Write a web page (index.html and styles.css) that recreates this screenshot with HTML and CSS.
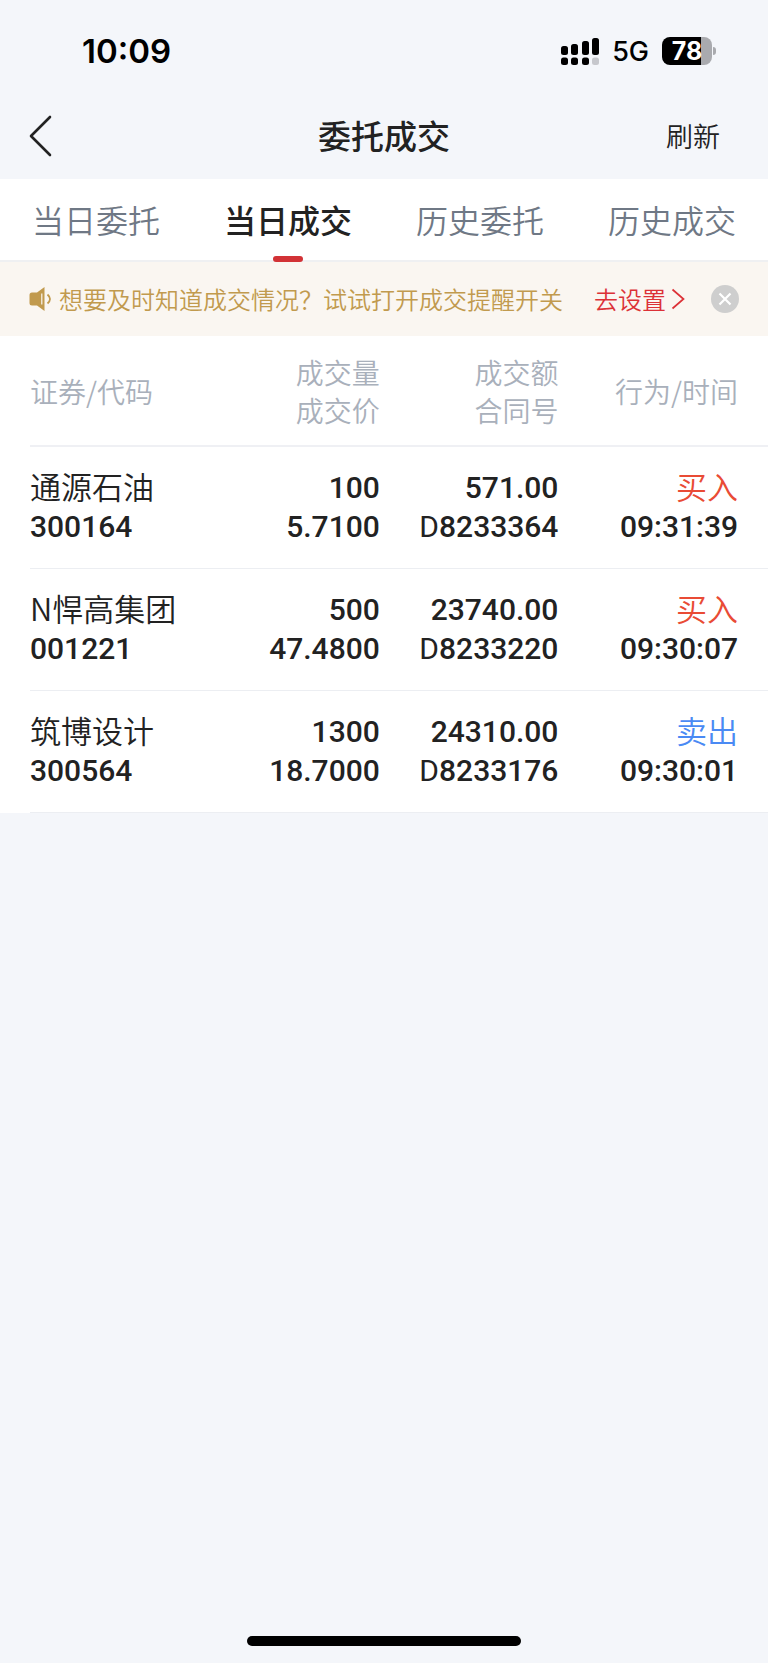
FILE: index.html
```html
<!DOCTYPE html>
<html lang="zh-CN">
<head>
<meta charset="utf-8">
<meta name="viewport" content="width=device-width, initial-scale=1">
<title>委托成交</title>
<link rel="stylesheet" href="styles.css">
</head>
<body>
<div class="app">
  <div class="status">
    <time class="clock">10:09</time>
    <div class="indicators">
      <svg class="signal" width="40" height="28" viewBox="0 0 40 28" aria-hidden="true">
        <rect x="1" y="9" width="7" height="9" rx="2.5"/>
        <rect x="11" y="7" width="7" height="11" rx="2.5"/>
        <rect x="22" y="4" width="7" height="14" rx="2.5"/>
        <rect x="32" y="1" width="7" height="17" rx="2.5"/>
        <rect x="1" y="20.500" width="7" height="7.500" rx="2.500"/>
        <rect x="11" y="20.500" width="7" height="7.500" rx="2.500"/>
        <rect x="22" y="20.500" width="7" height="7.500" rx="2.500"/>
        <rect x="32" y="20.500" width="7" height="7.500" rx="2.500" fill="#c6c7cc"/>
      </svg>
      <span class="network">5G</span>
      <span class="battery"><span class="level">78</span></span>
    </div>
  </div>

  <header class="navbar">
    <button class="back" type="button" aria-label="返回">
      <svg width="24" height="42" viewBox="0 0 24 42" aria-hidden="true"><path d="M21 2 2 21 21 40" fill="none" stroke="#222" stroke-width="2.600" stroke-linecap="round" stroke-linejoin="round"/></svg>
    </button>
    <h1 class="title">委托成交</h1>
    <button class="refresh" type="button">刷新</button>
  </header>

  <nav class="tabs">
    <a class="tab" href="#today-orders">当日委托</a>
    <a class="tab active" href="#today-deals" aria-current="page">当日成交</a>
    <a class="tab" href="#past-orders">历史委托</a>
    <a class="tab" href="#past-deals">历史成交</a>
  </nav>

  <div class="notice">
    <svg class="speaker" width="24" height="26" viewBox="0 0 24 26" aria-hidden="true">
      <path d="M3 6.500h5L15.500 1v24L8 19.500H3a2.500 2.500 0 0 1-2.500-2.500V9A2.500 2.500 0 0 1 3 6.500Z" fill="#c19a4e"/>
      <path d="M12.800 7.500v11" stroke="#faf6f1" stroke-width="1.200"/>
      <path d="M18.500 8.500q5 4.500 0 9" fill="none" stroke="#c19a4e" stroke-width="1.800"/>
    </svg>
    <p class="message">想要及时知道成交情况？试试打开成交提醒开关</p>
    <a class="setup" href="#settings">去设置<svg width="14" height="22" viewBox="0 0 14 22" aria-hidden="true"><path d="M1.500 1.500 12.500 11 1.500 20.500" fill="none" stroke="currentColor" stroke-width="1.700"/></svg></a>
    <button class="close" type="button" aria-label="关闭">
      <svg width="28" height="28" viewBox="0 0 28 28" aria-hidden="true"><circle cx="14" cy="14" r="14" fill="#cecece"/><path d="m8.500 8.500 11 11m0-11-11 11" stroke="#fff" stroke-width="2.200"/></svg>
    </button>
  </div>

  <main class="panel">
    <table class="deals">
      <thead>
        <tr>
          <th scope="col">证券/代码</th>
          <th scope="col">成交量<br>成交价</th>
          <th scope="col">成交额<br>合同号</th>
          <th scope="col">行为/时间</th>
        </tr>
      </thead>
      <tbody>
        <tr>
          <td><div class="name">通源石油</div><div>300164</div></td>
          <td>100<br>5.7100</td>
          <td>571.00<br><span class="prefix">D</span>8233364</td>
          <td><div class="name buy">买入</div><div>09:31:39</div></td>
        </tr>
        <tr>
          <td><div class="name">N悍高集团</div><div>001221</div></td>
          <td>500<br>47.4800</td>
          <td>23740.00<br><span class="prefix">D</span>8233220</td>
          <td><div class="name buy">买入</div><div>09:30:07</div></td>
        </tr>
        <tr>
          <td><div class="name">筑博设计</div><div>300564</div></td>
          <td>1300<br>18.7000</td>
          <td>24310.00<br><span class="prefix">D</span>8233176</td>
          <td><div class="name sell">卖出</div><div>09:30:01</div></td>
        </tr>
      </tbody>
    </table>
  </main>

  <footer class="home"><div class="home-bar"></div></footer>
</div>
</body>
</html>
```
FILE: styles.css
```css
* {
  box-sizing: border-box;
}

body {
  margin: 0;
  background: #f4f6fa;
  color: #222;
  font-family: "Noto Sans CJK SC", sans-serif;
  font-weight: 350;
}

button {
  padding: 0;
  border: 0;
  background: none;
  color: inherit;
  font: inherit;
  cursor: pointer;
}

a {
  color: inherit;
  text-decoration: none;
}

svg {
  display: block;
}

.app {
  display: flex;
  flex-direction: column;
  min-height: 100vh;
}

.status {
  display: flex;
  align-items: center;
  justify-content: space-between;
  height: 93px;
  padding: 9px 52px 0 82px;
  color: #000;
  font-family: Inter, sans-serif;
}

.clock {
  font-size: 33px;
  font-weight: 600;
}

.indicators {
  display: flex;
  align-items: center;
}

.network {
  margin: 0 13px 0 12px;
  font-size: 27px;
  font-weight: 500;
}

.battery {
  position: relative;
  width: 50px;
  height: 28px;
  margin-right: 4px;
  border-radius: 8px;
  background: linear-gradient(to right, #000 78%, #a9aaae 78%);
}

.battery::after {
  content: "";
  position: absolute;
  top: 10px;
  right: -4px;
  width: 3px;
  height: 8px;
  border-radius: 0 4px 4px 0;
  background: #a9aaae;
}

.level {
  display: block;
  color: #fff;
  font-size: 25px;
  font-weight: 700;
  line-height: 28px;
  text-align: center;
}

.navbar {
  display: grid;
  grid-template-columns: 1fr auto 1fr;
  align-items: center;
  height: 86px;
  padding: 0 48px 0 29px;
}

.back {
  justify-self: start;
}

.title {
  margin: 0 0 0 19px;
  padding-bottom: 3px;
  font-size: 33px;
  font-weight: 500;
  line-height: 48px;
}

.refresh {
  justify-self: end;
  font-size: 27px;
  line-height: 40px;
}

.tabs {
  display: grid;
  grid-template-columns: repeat(4, 1fr);
  height: 83px;
  border-bottom: 2px solid #eff0f2;
  background: #fff;
}

.tab {
  position: relative;
  color: #6f7885;
  font-size: 32px;
  line-height: 80px;
  text-align: center;
}

.active {
  color: #222;
  font-weight: 500;
}

.active::after {
  content: "";
  position: absolute;
  bottom: -2px;
  left: 50%;
  width: 30px;
  height: 6px;
  margin-left: -15px;
  border-radius: 3px;
  background: #d23236;
}

.notice {
  display: flex;
  align-items: center;
  height: 74px;
  padding: 0 29px;
  background: #faf6f1;
  font-size: 24px;
  line-height: 36px;
}

.message {
  flex: 1;
  margin: 0 0 0 6px;
  color: #c19a4e;
  white-space: nowrap;
}

.setup {
  display: flex;
  align-items: center;
  gap: 5px;
  margin-right: 26px;
  color: #dc3137;
}

.panel {
  padding-left: 30px;
  background: #fff;
}

.deals {
  width: 100%;
  table-layout: fixed;
  border-collapse: separate;
  border-spacing: 0;
  text-align: right;
}

.deals th {
  width: 24.2%;
  padding: 17px 0 16px;
  border-bottom: 2px solid #eff0f4;
  color: #a9b0bb;
  font-size: 28px;
  font-weight: 350;
  line-height: 38px;
}

.deals th:first-child,
.deals td:first-child {
  width: 23.2%;
  text-align: left;
}

.deals th:last-child,
.deals td:last-child {
  width: 28.4%;
  padding-right: 30px;
}

.deals td {
  padding: 21px 0 22px;
  border-bottom: 1px solid #eceef2;
  font-family: Roboto, "Noto Sans CJK SC", sans-serif;
  font-size: 30px;
  font-weight: 500;
  line-height: 39px;
}

.deals .name {
  padding-bottom: 4px;
  font-family: "Noto Sans CJK SC", sans-serif;
  font-size: 31px;
  font-weight: 350;
  line-height: 35px;
}

.prefix {
  font-weight: 400;
}

.buy {
  color: #e94b35;
}

.sell {
  color: #4a8af4;
}

.home {
  display: flex;
  justify-content: center;
  margin-top: auto;
  padding-bottom: 17px;
}

.home-bar {
  width: 274px;
  height: 10px;
  border-radius: 5px;
  background: #000;
}
```
